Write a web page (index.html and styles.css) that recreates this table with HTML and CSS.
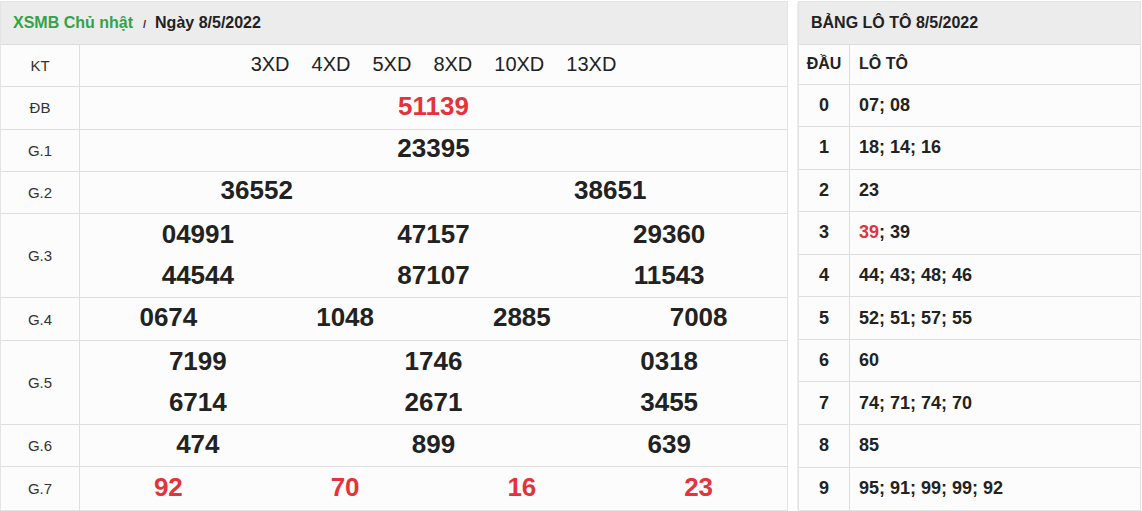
FILE: index.html
```html
<!DOCTYPE html>
<html lang="vi">
<head>
<meta charset="utf-8">
<title>XSMB Chủ nhật 8/5/2022</title>
<link rel="stylesheet" href="styles.css">
</head>
<body>
<div class="page">
  <section class="panel result">
    <div class="panel-head">
      <a class="crumb" href="#">XSMB Chủ nhật</a>
      <span class="sep">/</span>
      <span class="date">Ngày 8/5/2022</span>
    </div>
    <div class="row">
      <div class="label">KT</div>
      <div class="codes"><span>3XD</span><span>4XD</span><span>5XD</span><span>8XD</span><span>10XD</span><span>13XD</span></div>
    </div>
    <div class="row">
      <div class="label">ĐB</div>
      <div class="nums cols-1"><span class="red">51139</span></div>
    </div>
    <div class="row">
      <div class="label">G.1</div>
      <div class="nums cols-1"><span>23395</span></div>
    </div>
    <div class="row">
      <div class="label">G.2</div>
      <div class="nums cols-2"><span>36552</span><span>38651</span></div>
    </div>
    <div class="row double">
      <div class="label">G.3</div>
      <div class="nums cols-3"><span>04991</span><span>47157</span><span>29360</span><span>44544</span><span>87107</span><span>11543</span></div>
    </div>
    <div class="row g4">
      <div class="label">G.4</div>
      <div class="nums cols-4"><span>0674</span><span>1048</span><span>2885</span><span>7008</span></div>
    </div>
    <div class="row double">
      <div class="label">G.5</div>
      <div class="nums cols-3"><span>7199</span><span>1746</span><span>0318</span><span>6714</span><span>2671</span><span>3455</span></div>
    </div>
    <div class="row">
      <div class="label">G.6</div>
      <div class="nums cols-3"><span>474</span><span>899</span><span>639</span></div>
    </div>
    <div class="row g7">
      <div class="label">G.7</div>
      <div class="nums cols-4"><span class="red">92</span><span class="red">70</span><span class="red">16</span><span class="red">23</span></div>
    </div>
  </section>

  <section class="panel loto">
    <div class="panel-head"><span class="title">BẢNG LÔ TÔ 8/5/2022</span></div>
    <div class="lrow lhead"><div class="dau">ĐẦU</div><div class="vals">LÔ TÔ</div></div>
    <div class="lrow"><div class="dau">0</div><div class="vals">07; 08</div></div>
    <div class="lrow"><div class="dau">1</div><div class="vals">18; 14; 16</div></div>
    <div class="lrow"><div class="dau">2</div><div class="vals">23</div></div>
    <div class="lrow"><div class="dau">3</div><div class="vals"><span class="red">39</span>; 39</div></div>
    <div class="lrow"><div class="dau">4</div><div class="vals">44; 43; 48; 46</div></div>
    <div class="lrow"><div class="dau">5</div><div class="vals">52; 51; 57; 55</div></div>
    <div class="lrow"><div class="dau">6</div><div class="vals">60</div></div>
    <div class="lrow"><div class="dau">7</div><div class="vals">74; 71; 74; 70</div></div>
    <div class="lrow"><div class="dau">8</div><div class="vals">85</div></div>
    <div class="lrow"><div class="dau">9</div><div class="vals">95; 91; 99; 99; 92</div></div>
  </section>
</div>
</body>
</html>
```

FILE: styles.css
```css
* { box-sizing: border-box; }

html, body {
  margin: 0;
  padding: 0;
  background: #ffffff;
}

body {
  padding-top: 1px;
  font-family: "Liberation Sans", Arial, sans-serif;
  color: #222;
}

.page {
  display: flex;
  gap: 10px;
  align-items: flex-start;
}

.panel {
  border: 1px solid #e4e4e4;
  background: #fcfcfc;
}

.result {
  flex: 0 0 788px;
}

.loto {
  flex: 1 1 auto;
  margin-right: 1px;
  box-shadow: -3px 0 0 -2px #ececec;
}

.panel-head {
  height: 43px;
  background: #ececec;
  border-bottom: 1px solid #dcdcdc;
  display: flex;
  align-items: center;
  padding: 0 12px;
  font-size: 16px;
  font-weight: bold;
}

.crumb {
  color: #32a34b;
  text-decoration: none;
}

.sep {
  font-size: 11px;
  font-weight: bold;
  color: #333;
  margin: 1px 9px 0 10px;
}

.date, .title {
  color: #222;
}

.row {
  display: grid;
  grid-template-columns: 79px 1fr;
  height: 42.27px;
  border-bottom: 1px solid #dedede;
}

.row.double { height: 84px; }
.row.g4 { height: 43px; }
.row.g7 { height: 43px; border-bottom: none; }

.label {
  border-right: 1px solid #dedede;
  display: flex;
  align-items: center;
  justify-content: center;
  font-size: 15px;
  color: #333;
}

.codes {
  display: flex;
  align-items: center;
  justify-content: center;
  gap: 22px;
  font-size: 20px;
  color: #222;
  padding-bottom: 2px;
}

.nums {
  display: grid;
  align-items: center;
  justify-items: center;
  font-size: 26px;
  font-weight: bold;
  color: #222;
  padding-bottom: 3px;
}

.cols-1 { grid-template-columns: 1fr; }
.cols-2 { grid-template-columns: 1fr 1fr; }
.cols-3 { grid-template-columns: 1fr 1fr 1fr; }
.cols-4 { grid-template-columns: 1fr 1fr 1fr 1fr; }

.double .nums {
  grid-template-rows: 1fr 1fr;
  padding-bottom: 1px;
}

.red { color: #e4333a; }

.lrow {
  display: grid;
  grid-template-columns: 51px 1fr;
  height: 42.57px;
  border-bottom: 1px solid #dedede;
}

.lrow:last-child { border-bottom: none; }

.lrow.lhead {
  height: 39.5px;
}

.dau {
  border-right: 1px solid #dedede;
  display: flex;
  align-items: center;
  justify-content: center;
  font-size: 18px;
  font-weight: bold;
}

.vals {
  display: flex;
  align-items: center;
  padding-left: 9px;
  font-size: 18px;
  font-weight: bold;
}

.lhead .dau,
.lhead .vals {
  font-size: 16px;
}
```
